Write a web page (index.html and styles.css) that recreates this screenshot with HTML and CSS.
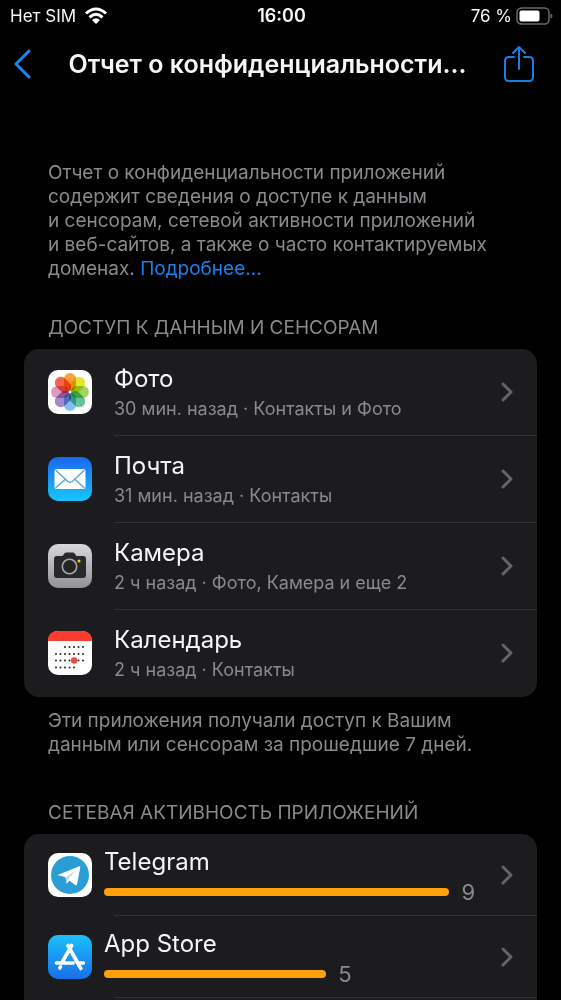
FILE: index.html
```html
<!DOCTYPE html>
<html lang="ru">
<head>
<meta charset="utf-8">
<meta name="viewport" content="width=device-width, initial-scale=1">
<title>Отчет о конфиденциальности</title>
<link rel="stylesheet" href="styles.css">
</head>
<body>
<div class="screen">
  <div class="status">
    <div class="status-left"><span>Нет SIM</span>
      <svg width="24" height="18" viewBox="0 0 24 18" fill="none" stroke="#fff" stroke-width="3" aria-hidden="true"><path d="M2 6.500Q12-2.500 22 6.500M5.500 10.300Q12 4.300 18.500 10.300"/><path d="M12 17L8 13Q12 9.500 16 13Z" fill="#fff" stroke="none"/></svg>
    </div>
    <span class="clock">16:00</span>
    <div class="status-right"><span>76 %</span>
      <svg width="37" height="18" viewBox="0 0 37 18" aria-hidden="true"><rect x="1" y="1" width="32" height="16" rx="4.500" fill="none" stroke="#68686a" stroke-width="1.500"/><rect x="3.500" y="3.500" width="20" height="11" rx="2" fill="#fff"/><path d="M34.500 6.500q2 .5 2 2.500t-2 2.500z" fill="#68686a"/></svg>
    </div>
  </div>

  <header class="nav">
    <button class="icon-button" aria-label="Назад"><svg width="18" height="30" viewBox="0 0 18 30" fill="none" stroke="#1687f5" stroke-width="3" stroke-linecap="round" stroke-linejoin="round"><path d="M16 2L3 15l13 13"/></svg></button>
    <h1>Отчет о конфиденциальности...</h1>
    <button class="icon-button" aria-label="Поделиться"><svg width="30" height="38" viewBox="0 0 30 38" fill="none" stroke="#1c7de0" stroke-width="2" stroke-linecap="round" stroke-linejoin="round"><path d="M10 12H5q-4 0-4 4v16q0 4 4 4h20q4 0 4-4V16q0-4-4-4h-5M15 24V2M9 8l6-6 6 6"/></svg></button>
  </header>

  <main>
    <p class="note">Отчет о конфиденциальности приложений содержит сведения о доступе к данным и&nbsp;сенсорам, сетевой активности приложений и&nbsp;веб-сайтов, а также о часто контактируемых доменах. <a href="#more">Подробнее...</a></p>

    <h2>ДОСТУП К ДАННЫМ И СЕНСОРАМ</h2>
    <ul class="card">
      <li><a class="row" href="#photos">
        <svg class="app" viewBox="0 0 44 44"><rect width="44" height="44" rx="10" fill="#fff"/>
          <g class="petals">
            <rect x="16" y="3" width="12" height="18" rx="6" fill="#f9a13a"/>
            <rect x="16" y="3" width="12" height="18" rx="6" fill="#e6e32c" transform="rotate(45 22 22)"/>
            <rect x="16" y="3" width="12" height="18" rx="6" fill="#a3d55f" transform="rotate(90 22 22)"/>
            <rect x="16" y="3" width="12" height="18" rx="6" fill="#62c599" transform="rotate(135 22 22)"/>
            <rect x="16" y="3" width="12" height="18" rx="6" fill="#83bfea" transform="rotate(180 22 22)"/>
            <rect x="16" y="3" width="12" height="18" rx="6" fill="#a08bcb" transform="rotate(225 22 22)"/>
            <rect x="16" y="3" width="12" height="18" rx="6" fill="#de9bc6" transform="rotate(270 22 22)"/>
            <rect x="16" y="3" width="12" height="18" rx="6" fill="#f5654f" transform="rotate(315 22 22)"/>
          </g></svg>
        <span class="text"><span class="name">Фото</span><span class="detail">30 мин. назад · Контакты и Фото</span></span>
        <svg class="chevron" viewBox="0 0 12 20"><path d="M2 2l8 8-8 8"/></svg></a></li>
      <li><a class="row" href="#mail">
        <svg class="app" viewBox="0 0 44 44"><defs><linearGradient id="mail-fill" x2="0" y2="1"><stop stop-color="#1b67ee"/><stop offset="1" stop-color="#18c5fb"/></linearGradient></defs><rect width="44" height="44" rx="10" fill="url(#mail-fill)"/><rect x="6.500" y="12" width="31" height="20" rx="2" fill="#fff"/><path d="M7.500 13l12 11.300q2.500 2 5 0L36.500 13M7.500 31l10-9M36.500 31l-10-9" fill="none" stroke="#4fa4de" stroke-width="1.300"/></svg>
        <span class="text"><span class="name">Почта</span><span class="detail">31 мин. назад · Контакты</span></span>
        <svg class="chevron" viewBox="0 0 12 20"><path d="M2 2l8 8-8 8"/></svg></a></li>
      <li><a class="row" href="#camera">
        <svg class="app" viewBox="0 0 44 44"><defs><linearGradient id="camera-fill" x2="0" y2="1"><stop stop-color="#d7d6db"/><stop offset="1" stop-color="#929196"/></linearGradient></defs><rect width="44" height="44" rx="10" fill="url(#camera-fill)"/><path d="M9 12h5q1 0 2-2 .7-1.500 2-1.500h7q1.300 0 2 1.500 1 2 2 2h6q3 0 3 3v16q0 3-3 3H9q-3 0-3-3V15q0-3 3-3z" fill="#29292c"/><circle cx="21.500" cy="22.500" r="7.200" fill="#242426" stroke="#a7a7ac" stroke-width="1.600"/><circle cx="31" cy="17" r="1.500" fill="#f4d119"/></svg>
        <span class="text"><span class="name">Камера</span><span class="detail">2 ч назад · Фото, Камера и еще 2</span></span>
        <svg class="chevron" viewBox="0 0 12 20"><path d="M2 2l8 8-8 8"/></svg></a></li>
      <li><a class="row" href="#calendar">
        <svg class="app" viewBox="0 0 44 44"><rect width="44" height="44" rx="10" fill="#fff"/><path d="M0 10Q0 0 10 0h24q10 0 10 10z" fill="#fb3b30"/><g fill="none" stroke="#242424" stroke-width="2" stroke-linecap="round" stroke-dasharray="0 4.500"><path d="M17 16h18.500M8 23h28M8 29.500h28M8 36.500h18.500"/></g><circle cx="26.200" cy="29.500" r="3.200" fill="#f24747"/></svg>
        <span class="text"><span class="name">Календарь</span><span class="detail">2 ч назад · Контакты</span></span>
        <svg class="chevron" viewBox="0 0 12 20"><path d="M2 2l8 8-8 8"/></svg></a></li>
    </ul>
    <p class="note footnote">Эти приложения получали доступ к Вашим данным или сенсорам за прошедшие 7 дней.</p>

    <h2>СЕТЕВАЯ АКТИВНОСТЬ ПРИЛОЖЕНИЙ</h2>
    <ul class="card network">
      <li><a class="row" href="#telegram">
        <svg class="app" viewBox="0 0 44 44"><rect width="44" height="44" rx="10" fill="#fff"/><circle cx="22" cy="22" r="19" fill="#2b9dd6"/><path d="M9.500 22L31.500 13.300q1-.3.800.9L29 31.500q-.4 1.500-1.700.5l-5.800-4.300-3 3-1-6.500z" fill="#fff"/><path d="M17.800 29.700l.4-5.400 9.600-7.300-7.300 8.800z" fill="#b9d9eb"/></svg>
        <span class="text"><span class="name">Telegram</span><span class="usage"><span class="bar" style="width: 87%"></span><span class="count">9</span></span></span>
        <svg class="chevron" viewBox="0 0 12 20"><path d="M2 2l8 8-8 8"/></svg></a></li>
      <li><a class="row" href="#app-store">
        <svg class="app" viewBox="0 0 44 44"><defs><linearGradient id="store-fill" x2="0" y2="1"><stop stop-color="#1bc0fc"/><stop offset="1" stop-color="#196fea"/></linearGradient></defs><rect width="44" height="44" rx="10" fill="url(#store-fill)"/><g fill="none" stroke="#fff" stroke-width="3.600" stroke-linecap="round"><path d="M23.700 10.500L14 27.500M11.800 33l.7-1.200M20 10.500l12.800 23M8.500 28h16.800M31.500 28h3.800"/></g></svg>
        <span class="text"><span class="name">App Store</span><span class="usage"><span class="bar" style="width: 56%"></span><span class="count">5</span></span></span>
        <svg class="chevron" viewBox="0 0 12 20"><path d="M2 2l8 8-8 8"/></svg></a></li>
    </ul>
  </main>
</div>
</body>
</html>
```
FILE: styles.css
```css
* { box-sizing: border-box; }
body {
  margin: 0;
  background: #000;
  color: #f5f5f7;
  font-family: Inter, "Noto Sans", sans-serif;
}
a { color: inherit; text-decoration: none; }
.screen {
  display: flex;
  flex-direction: column;
  height: 100vh;
  overflow: hidden;
}
.status {
  display: grid;
  grid-template-columns: 1fr auto 1fr;
  align-items: center;
  height: 32px;
  padding: 0 8px 0 10px;
  font-size: 17px;
  line-height: 20px;
}
.status-left, .status-right { display: flex; align-items: center; gap: 8px; }
.status-right { justify-content: flex-end; gap: 4px; }
.clock { font-size: 18px; font-weight: 600; }
.nav {
  display: flex;
  align-items: center;
  justify-content: space-between;
  height: 64px;
  padding: 0 27px 0 13px;
}
h1 {
  margin: 0;
  font-size: 25px;
  font-weight: 600;
  line-height: 32px;
  white-space: nowrap;
}
.icon-button {
  display: flex;
  padding: 0;
  border: 0;
  background: none;
}
main {
  display: flex;
  flex: 1;
  flex-direction: column;
  padding: 65px 24px 0;
}
.note {
  margin: 0;
  padding: 0 24px;
  color: #89898e;
  font-size: 19px;
  line-height: 24px;
}
.note a { color: #1880e8; }
h2 {
  margin: 35px 0 9px;
  padding: 0 24px;
  color: #89898e;
  font-size: 19px;
  font-weight: 400;
  line-height: 24px;
}
.card {
  margin: 0;
  padding: 0;
  border-radius: 15px;
  background: #1c1c1e;
  list-style: none;
}
.card li::after {
  content: "";
  display: block;
  height: 1px;
  margin-left: 90px;
  background: #323234;
}
.card:not(.network) li:last-child::after { background: none; }
.row {
  display: flex;
  align-items: center;
  gap: 22px;
  height: 86px;
  padding: 0 24px;
}
.app { flex: none; width: 44px; height: 44px; }
.petals rect { mix-blend-mode: multiply; }
.text {
  display: flex;
  flex: 1;
  flex-direction: column;
  min-width: 0;
}
.name { font-size: 24px; line-height: 34px; }
.detail { color: #89898e; font-size: 18px; line-height: 26px; }
.chevron {
  flex: none;
  width: 12px;
  height: 20px;
  fill: none;
  stroke: #656569;
  stroke-width: 3;
  stroke-linecap: round;
  stroke-linejoin: round;
}
.footnote { padding-top: 12px; }
.footnote + h2 { margin-top: 44px; }
.network { flex: 1; border-radius: 15px 15px 0 0; }
.network .row { gap: 12px; height: 81px; }
.network .chevron { margin-left: -12px; }
.usage {
  display: flex;
  align-items: center;
  gap: 12px;
  color: #89898e;
  font-size: 22px;
  line-height: 26px;
}
.bar {
  height: 8px;
  border-radius: 4px;
  background: #ff9f0a;
}
```
